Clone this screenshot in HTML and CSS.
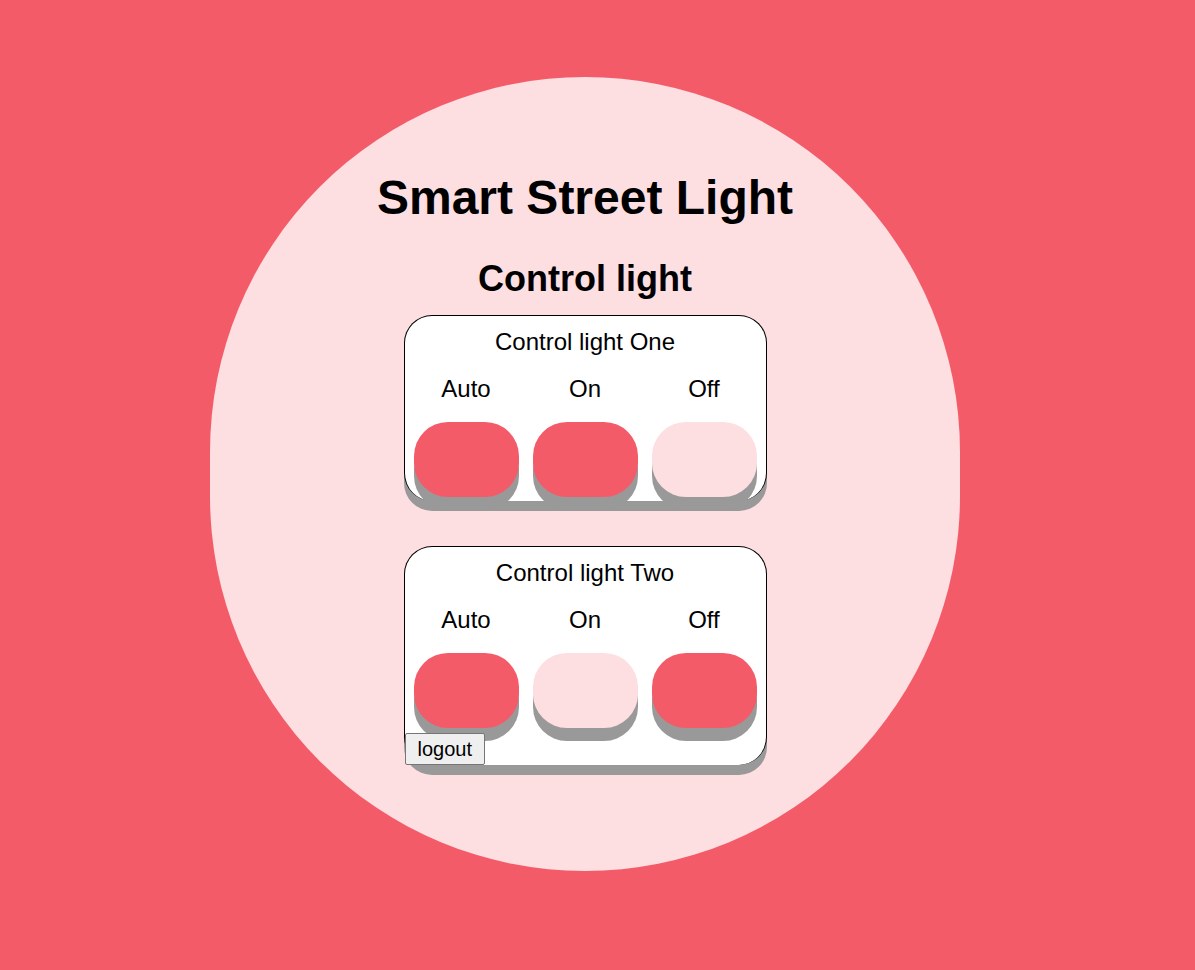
FILE: index.html
```html
<!DOCTYPE html>
<html lang="en">
<head>
<meta charset="utf-8">
<title>Smart Street Light</title>
<link rel="stylesheet" href="styles.css">
</head>
<body>
<main class="circle">
  <h1 class="title">Smart Street Light</h1>
  <h2 class="subtitle">Control light</h2>
  <section class="card">
    <h3 class="card-title">Control light One</h3>
    <div class="controls">
      <span class="label">Auto</span>
      <span class="label">On</span>
      <span class="label">Off</span>
      <button class="toggle on" aria-label="Auto"></button>
      <button class="toggle on" aria-label="On"></button>
      <button class="toggle off" aria-label="Off"></button>
    </div>
  </section>
  <section class="card second">
    <h3 class="card-title">Control light Two</h3>
    <div class="controls">
      <span class="label">Auto</span>
      <span class="label">On</span>
      <span class="label">Off</span>
      <button class="toggle on" aria-label="Auto"></button>
      <button class="toggle off" aria-label="On"></button>
      <button class="toggle on" aria-label="Off"></button>
    </div>
    <button class="logout">logout</button>
  </section>
</main>
</body>
</html>
```

FILE: styles.css
```css
html, body {
  margin: 0;
  padding: 0;
}
body {
  background: #f45b69;
  font-family: "Liberation Sans", Arial, sans-serif;
  color: #000;
  height: 970px;
  overflow: hidden;
  padding-top: 77px;
  box-sizing: border-box;
}
.circle {
  width: 750px;
  height: 794px;
  margin-left: 210px;
  box-sizing: border-box;
  padding-top: 93px;
  background: #fddee1;
  border-radius: 375px;
  display: flex;
  flex-direction: column;
  align-items: center;
}
.title {
  margin: 0;
  font-size: 48px;
  font-weight: bold;
  line-height: normal;
}
.subtitle {
  margin: 33px 0 0;
  font-size: 36px;
  font-weight: bold;
  line-height: normal;
}
.card {
  width: 363px;
  box-sizing: border-box;
  margin-top: 15px;
  background: #fff;
  border: 1px solid #000;
  border-bottom: none;
  border-radius: 28px;
  box-shadow: 0 10px #999;
  padding-bottom: 4px;
  display: flex;
  flex-direction: column;
}
.card.second {
  margin-top: 45px;
  padding-bottom: 0;
}
.card-title {
  margin: 12px 0 0;
  font-size: 24px;
  font-weight: normal;
  line-height: normal;
  text-align: center;
}
.controls {
  margin-top: 19px;
  display: grid;
  grid-template-columns: repeat(3, 105px);
  column-gap: 14px;
  row-gap: 19px;
  justify-content: center;
}
.label {
  font-size: 24px;
  line-height: normal;
  text-align: center;
}
.toggle {
  width: 105px;
  height: 75px;
  border: none;
  border-radius: 34px;
  box-shadow: 0 13px #999;
  padding: 0;
  cursor: pointer;
}
.toggle.on {
  background: #f45b69;
}
.toggle.off {
  background: #fddee1;
}
.logout {
  align-self: flex-start;
  margin-top: 5px;
  height: 32px;
  padding: 0 12px;
  font-family: "Liberation Sans", Arial, sans-serif;
  font-size: 20px;
  background: #efefef;
  color: #000;
  border: 1px solid #767676;
  border-radius: 2px;
  position: relative;
}
```
